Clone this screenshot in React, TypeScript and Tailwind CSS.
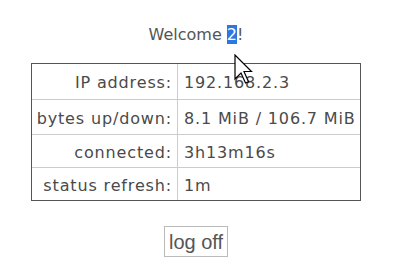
import React from "react";

const rows: [string, string][] = [
  ["IP address:", "192.168.2.3"],
  ["bytes up/down:", "8.1 MiB / 106.7 MiB"],
  ["connected:", "3h13m16s"],
  ["status refresh:", "1m"],
];

export default function App() {
  return (
    <div className="relative w-[400px] h-[264px] bg-white overflow-hidden">
      <div className="w-[392px] flex flex-col items-center">
        <div
          className="mt-[25px] text-[16px] leading-[19px] text-[#555]"
          style={{ fontFamily: '"DejaVu Sans", sans-serif' }}
        >
          Welcome <span className="bg-[#2b78e0] text-white">2</span>!
        </div>
        <div
          className="mt-[19px] w-[330px] border border-[#555] flex flex-col text-[16px] leading-[18px] tracking-[0.85px] text-[#4a4a4a]"
          style={{ fontFamily: '"DejaVu Sans", sans-serif' }}
        >
          {rows.map(([k, v], i) => (
            <div
              key={k}
              className={`grid grid-cols-[145px_1fr] ${i === 0 ? "" : "border-t border-[#ccc]"} ${i < 2 ? "h-[35px]" : "h-[33px]"}`}
            >
              <div className="flex items-center justify-end pr-[5px] pt-[3px] whitespace-nowrap">
                {k}
              </div>
              <div className="flex items-center border-l border-[#ccc] pl-[6px] pt-[3px] whitespace-nowrap">
                {v}
              </div>
            </div>
          ))}
        </div>
        <button
          className="mt-[25px] w-[64px] h-[31px] border border-[#bbb] bg-white text-[20px] leading-[22px] text-[#555] flex items-center justify-center"
          style={{ fontFamily: '"Liberation Sans", Arial, sans-serif' }}
        >
          log off
        </button>
      </div>
      <svg
        className="absolute left-[234px] top-[54px]"
        width="20"
        height="32"
        viewBox="0 0 20 32"
      >
        <path
          d="M1 1 L1 25 L7 19 L11.5 29 L14.5 27.8 L10 17.5 L17.5 17.5 Z"
          fill="white"
          stroke="black"
          strokeWidth="1.2"
          strokeLinejoin="miter"
        />
      </svg>
    </div>
  );
}
